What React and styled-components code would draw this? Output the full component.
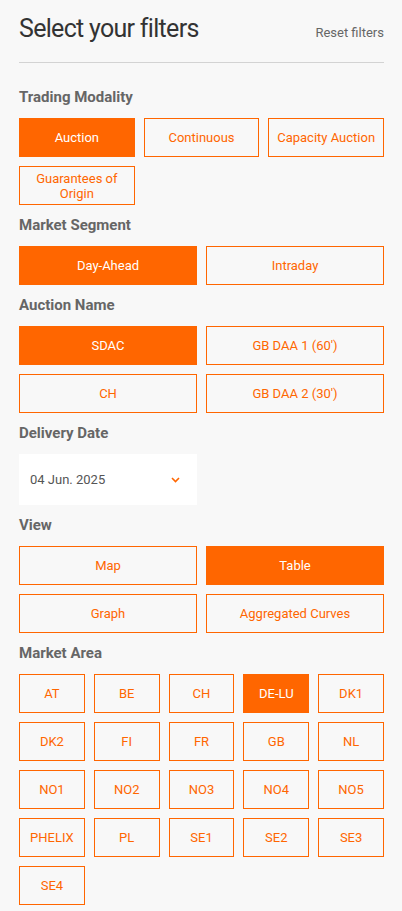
import React, { useState } from "react";
import styled, { createGlobalStyle } from "styled-components";

const GlobalStyle = createGlobalStyle`
  body {
    margin: 0;
    background: #f8f8f8;
    font-family: Roboto, "Liberation Sans", sans-serif;
  }
  * {
    box-sizing: border-box;
  }
`;

const ORANGE = "#ff6600";

const tradingModalities = ["Auction", "Continuous", "Capacity Auction", "Guarantees of Origin"];
const segments = ["Day-Ahead", "Intraday"];
const auctions = ["SDAC", "GB DAA 1 (60')", "CH", "GB DAA 2 (30')"];
const views = ["Map", "Table", "Graph", "Aggregated Curves"];
const areas = [
  "AT", "BE", "CH", "DE-LU", "DK1",
  "DK2", "FI", "FR", "GB", "NL",
  "NO1", "NO2", "NO3", "NO4", "NO5",
  "PHELIX", "PL", "SE1", "SE2", "SE3",
  "SE4",
];

const OptionGroup = ({ cols, options, value, onChange }) => (
  <ButtonGrid $cols={cols}>
    {options.map((opt) => (
      <Chip key={opt} $active={opt === value} onClick={() => onChange(opt)}>
        {opt}
      </Chip>
    ))}
  </ButtonGrid>
);

const App = () => {
  const [modality, setModality] = useState("Auction");
  const [segment, setSegment] = useState("Day-Ahead");
  const [auction, setAuction] = useState("SDAC");
  const [view, setView] = useState("Table");
  const [area, setArea] = useState("DE-LU");

  return (
    <Panel>
      <GlobalStyle />
      <Header>
        <Title>Select your filters</Title>
        <ResetLink>Reset filters</ResetLink>
      </Header>
      <Divider />

      <Section>
        <Label>Trading Modality</Label>
        <OptionGroup cols={3} options={tradingModalities} value={modality} onChange={setModality} />
      </Section>

      <Section>
        <Label>Market Segment</Label>
        <OptionGroup cols={2} options={segments} value={segment} onChange={setSegment} />
      </Section>

      <Section>
        <Label>Auction Name</Label>
        <OptionGroup cols={2} options={auctions} value={auction} onChange={setAuction} />
      </Section>

      <Section>
        <Label>Delivery Date</Label>
        <DateSelect>
          <span>04 Jun. 2025</span>
          <svg width="9" height="6" viewBox="0 0 9 6">
            <polyline points="1,1 4.5,4.5 8,1" fill="none" stroke={ORANGE} strokeWidth="1.6" />
          </svg>
        </DateSelect>
      </Section>

      <Section>
        <Label>View</Label>
        <OptionGroup cols={2} options={views} value={view} onChange={setView} />
      </Section>

      <Section>
        <Label>Market Area</Label>
        <OptionGroup cols={5} options={areas} value={area} onChange={setArea} />
      </Section>
    </Panel>
  );
};

const Panel = styled.div`
  width: 402px;
  padding: 14px 18px 20px 19px;
`;

const Header = styled.div`
  display: flex;
  justify-content: space-between;
  align-items: baseline;
`;

const Title = styled.h1`
  margin: 0;
  font-size: 25px;
  line-height: 29px;
  font-weight: 400;
  letter-spacing: -0.7px;
  color: #333;
`;

const ResetLink = styled.a`
  font-size: 13px;
  color: #666;
  cursor: pointer;
`;

const Divider = styled.hr`
  border: 0;
  border-top: 1px solid #d3d3d3;
  margin: 19px 0 14px;
`;

const Section = styled.section`
  padding-top: 10px;
`;

const Label = styled.h3`
  margin: 0 0 11px;
  font-size: 15px;
  line-height: 20px;
  font-weight: 700;
  color: #666;
`;

const ButtonGrid = styled.div`
  display: grid;
  grid-template-columns: repeat(${(p) => p.$cols}, 1fr);
  gap: 9px;
`;

const Chip = styled.button`
  height: 39px;
  padding: 0 6px;
  border: 1px solid ${ORANGE};
  background: ${(p) => (p.$active ? ORANGE : "transparent")};
  color: ${(p) => (p.$active ? "#fff" : ORANGE)};
  font-family: Roboto, "Liberation Sans", sans-serif;
  font-size: 13px;
  line-height: 15px;
  text-align: center;
  cursor: pointer;
`;

const DateSelect = styled.div`
  width: 178px;
  height: 51px;
  display: flex;
  align-items: center;
  justify-content: space-between;
  padding: 0 17px 0 11px;
  background: #fff;
  font-size: 13px;
  color: #555;
`;

export default App;
